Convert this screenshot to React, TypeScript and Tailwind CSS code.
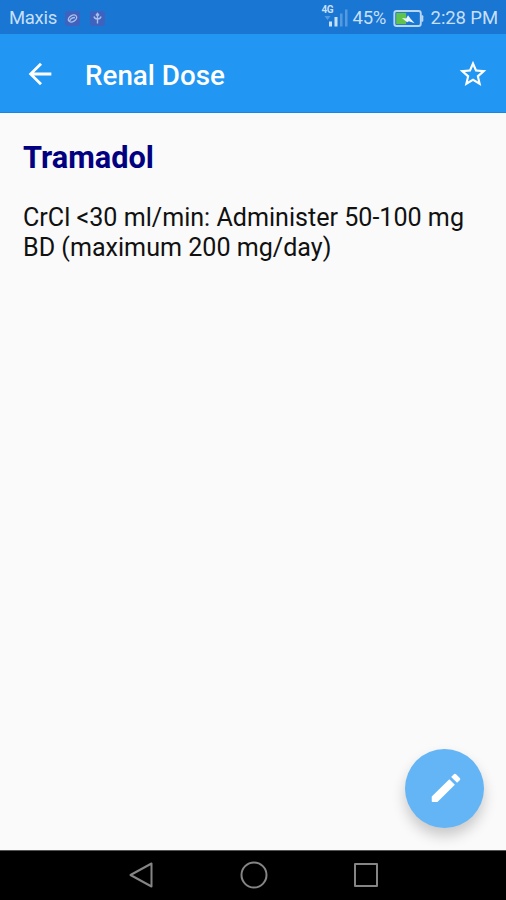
import type { ReactNode } from 'react';

interface IconProps {
  className?: string;
}

interface MaterialIconProps extends IconProps {
  path: string;
}

const iconPaths = {
  back: 'M20 11H7.83l5.59-5.59L12 4l-8 8 8 8 1.41-1.41L7.83 13H20v-2z',
  star: 'M22 9.24l-7.19-.62L12 2 9.19 8.63 2 9.24l5.46 4.73L5.82 21 12 17.27 18.18 21l-1.63-7.03L22 9.24zM12 15.4l-3.76 2.27 1-4.28-3.32-2.88 4.38-.38L12 6.1l1.71 4.04 4.38.38-3.32 2.88 1 4.28L12 15.4z',
  edit: 'M3 17.4V20.3q0 .5.5.5H6.6L17.6 9.9l-3.5-3.5L3 17.4zM20.71 7.04a1 1 0 0 0 0-1.41l-2.34-2.34a1 1 0 0 0-1.41 0l-1.7 1.7 3.75 3.75 1.7-1.7z',
};

function MaterialIcon({ path, className }: MaterialIconProps) {
  return (
    <svg viewBox="0 0 24 24" fill="currentColor" className={className}>
      <path d={path} />
    </svg>
  );
}

function NotificationBadge({ children }: { children: ReactNode }) {
  return (
    <span className="flex h-[15px] w-[15px] items-center justify-center rounded-[3px] bg-[#3e62bd]">
      <svg viewBox="0 0 15 15" className="h-[15px] w-[15px]" fill="none" stroke="#a9bfea" strokeWidth="1.4">
        {children}
      </svg>
    </span>
  );
}

function SignalIcon() {
  return (
    <span className="relative block h-6 w-7 text-[#c7dff7]">
      <span className="absolute top-0 left-[2px] text-[10px] leading-[10px] font-bold tracking-[-0.5px]">4G</span>
      <svg viewBox="0 0 28 24" className="h-6 w-7" fill="currentColor">
        <path d="M4.5 11h6L7.500 15z" opacity="0.35" />
        <rect x="9" y="16.5" width="3" height="5" />
        <rect x="14.5" y="12" width="3" height="9.5" />
        <rect x="20" y="8.5" width="2.5" height="13" opacity="0.35" />
        <rect x="25" y="4.5" width="2.5" height="17" opacity="0.35" />
      </svg>
    </span>
  );
}

function BatteryIcon({ className }: IconProps) {
  return (
    <svg viewBox="0 0 32 18" className={className}>
      <rect x="1" y="1" width="28" height="16" rx="2.5" fill="none" stroke="#b9d6f4" strokeWidth="2" />
      <path d="M29.5 5.5h1.2q1 0 1 1v5q0 1-1 1h-1.2z" fill="#b9d6f4" />
      <rect x="3" y="3" width="10.5" height="12" fill="#62c34c" />
      <path d="M9 8.5l4.5.5 2-3.500 2.500 3.500 4.500 5-6-2-2 1z" fill="#eaf5fc" />
    </svg>
  );
}

function StatusBar() {
  return (
    <div className="flex h-[34px] items-center justify-between bg-[#1976d2] pr-2 pl-[9px] text-[18.5px] text-[#c7dff7]">
      <div className="flex items-center">
        <span className="mt-[3px] w-14 tracking-[-0.3px]">Maxis</span>
        <div className="mt-0.5 flex gap-[10px]">
          <NotificationBadge>
            <ellipse cx="7.5" cy="7.5" rx="4.5" ry="3" transform="rotate(-30 7.5 7.5)" />
            <path d="M4.5 10.5q1-4 5.5-4" />
          </NotificationBadge>
          <NotificationBadge>
            <path d="M7.5 12.5V3.5M4 5.5q.5 2.500 3.500 2.500t3.500-2.500M6 4.500l1.500-2 1.500 2" />
          </NotificationBadge>
        </div>
      </div>
      <div className="flex items-center">
        <SignalIcon />
        <span className="mt-[3px] ml-[5px] w-10 whitespace-nowrap tracking-[-0.3px]">45%</span>
        <BatteryIcon className="mt-0.5 h-[17px] w-[31px]" />
        <span className="mt-[3px] ml-[7px] whitespace-nowrap tracking-[-0.1px]">2:28 PM</span>
      </div>
    </div>
  );
}

function AppBar() {
  return (
    <header className="flex h-[79px] items-center border-b border-[#1c85e3] bg-[#2196f3] pr-[17px] pl-[23px] text-white">
      <button aria-label="Back" className="mt-px">
        <MaterialIcon path={iconPaths.back} className="h-[34px] w-[34px]" />
      </button>
      <h1 className="mt-[5px] ml-7 flex-1 text-[27.8px] leading-8 font-medium">Renal Dose</h1>
      <button aria-label="Add to favourites" className="mt-0.5">
        <MaterialIcon path={iconPaths.star} className="h-8 w-8" />
      </button>
    </header>
  );
}

function NavigationBar() {
  return (
    <nav className="flex h-[50px] items-center justify-center gap-[84px] border-t border-[#555] bg-black pb-px pl-px">
      <svg viewBox="0 0 28 28" className="h-7 w-7" fill="none" stroke="#858585" strokeWidth="2" strokeLinejoin="round">
        <path d="M2.5 14L23.5 2.5v23z" />
      </svg>
      <svg viewBox="0 0 28 28" className="h-7 w-7" fill="none" stroke="#858585" strokeWidth="2">
        <circle cx="14" cy="14" r="12.5" />
      </svg>
      <svg viewBox="0 0 28 28" className="h-7 w-7" fill="none" stroke="#858585" strokeWidth="2" strokeLinejoin="round">
        <rect x="3" y="3" width="22" height="22" />
      </svg>
    </nav>
  );
}

export default function App() {
  return (
    <div className="flex h-[900px] w-[506px] flex-col overflow-hidden bg-[#fafafa] font-[Roboto,sans-serif]">
      <StatusBar />
      <AppBar />
      <main className="relative flex-1 px-[23px] pt-[27px] text-[#111]">
        <h2 className="text-[30.7px] leading-9 font-bold text-[#000080]">Tramadol</h2>
        <p className="mt-[27px] text-[25.1px] leading-[29.5px]">
          CrCl &lt;30 ml/min: Administer 50-100 mg
          <br />
          BD (maximum 200 mg/day)
        </p>
        <button
          aria-label="Edit"
          className="absolute right-[22px] bottom-[22px] flex h-[79px] w-[79px] items-center justify-center rounded-full bg-[#64b5f6] pb-0.5 pl-0.5 text-white shadow-[0_8px_14px_rgba(0,0,0,0.2)]"
        >
          <MaterialIcon path={iconPaths.edit} className="h-[38px] w-[38px]" />
        </button>
      </main>
      <NavigationBar />
    </div>
  );
}
